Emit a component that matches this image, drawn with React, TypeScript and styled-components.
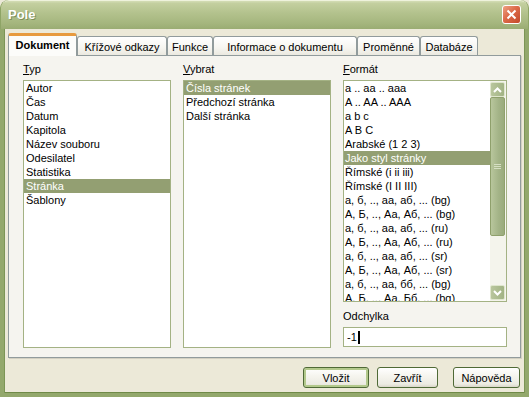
import React from 'react'
import styled, { createGlobalStyle } from 'styled-components'

const GlobalStyle = createGlobalStyle`
  html, body {
    margin: 0;
    padding: 0;
    background: #ece9d8;
  }
  body {
    font-family: "Liberation Sans", Arial, sans-serif;
    font-size: 11px;
    color: #000;
  }
`

const Window = styled.div`
  width: 529px;
  height: 397px;
  display: flex;
  flex-direction: column;
  background: #ece9d8;
  border-radius: 8px 8px 0 0;
  overflow: hidden;
`

const TitleBar = styled.div`
  height: 29px;
  flex: none;
  display: flex;
  align-items: center;
  justify-content: space-between;
  padding: 0 8px 0 8px;
  box-sizing: border-box;
  background: linear-gradient(to bottom, #dbe3bf 0%, #c3cf9f 12%, #b3c28d 45%, #a5b67e 80%, #9aac73 100%);
  border-radius: 8px 8px 0 0;
  box-shadow: inset 1px 0 0 #8ea466, inset -1px 0 0 #8ea466, inset 0 1px 0 #eef2dc;
`

const Title = styled.div`
  font-family: "Liberation Sans", Arial, sans-serif;
  font-weight: bold;
  font-size: 13px;
  color: #fff;
  text-shadow: 1px 1px 0 #7d8f58;
`

const CloseButton = styled.div`
  width: 19px;
  height: 19px;
  box-sizing: border-box;
  border: 1px solid #fff;
  border-radius: 3px;
  background: linear-gradient(135deg, #eea183 0%, #dc6b49 45%, #c4482a 100%);
  display: flex;
  align-items: center;
  justify-content: center;
`

const Body = styled.div`
  flex: 1;
  display: flex;
  flex-direction: column;
  padding: 4px 4px 0 4px;
  border: 4px solid #93a86c;
  border-top: none;
  box-shadow: inset 1px 0 0 #7c9556, inset -1px 0 0 #7c9556, inset 0 -1px 0 #6f8a48;
  box-sizing: border-box;
  min-height: 0;
`

const TabStrip = styled.div`
  height: 22px;
  display: flex;
  align-items: flex-end;
  flex: none;
`

const Tab = styled.div<{ $w: number; $active?: boolean }>`
  width: ${p => p.$w}px;
  box-sizing: border-box;
  display: flex;
  align-items: center;
  justify-content: center;
  white-space: nowrap;
  border: 1px solid #919b9c;
  border-bottom: none;
  border-radius: 3px 3px 0 0;
  position: relative;
  ${p =>
    p.$active
      ? `
    height: 23px;
    margin-bottom: -1px;
    z-index: 1;
    font-weight: bold;
    background: #fcfcfa;
    border-top: 3px solid #e79a3e;
    padding-bottom: 2px;
  `
      : `
    height: 19px;
    background: linear-gradient(to bottom, #ffffff 0%, #f6f5f0 60%, #ebe9e0 100%);
    padding-top: 1px;
  `}
`

const Panel = styled.div`
  height: 303px;
  flex: none;
  box-sizing: border-box;
  border: 1px solid #919b9c;
  background: #f5f4ef;
  box-shadow: 1px 1px 0 #d3d0c2;
  display: grid;
  grid-template-columns: 148px 148px 1fr;
  column-gap: 12px;
  padding: 6px 13px 0 14px;
`

const Column = styled.div`
  display: flex;
  flex-direction: column;
  min-width: 0;
`

const Label = styled.div<{ $top?: number }>`
  height: 14px;
  line-height: 14px;
  margin-top: ${p => p.$top ?? 0}px;
  margin-bottom: 4px;
  white-space: nowrap;
`

const ListBox = styled.div<{ $h: number }>`
  height: ${p => p.$h}px;
  box-sizing: border-box;
  border: 1px solid #a4b284;
  background: #fff;
  display: flex;
  overflow: hidden;
`

const Items = styled.div`
  flex: 1;
  min-width: 0;
  display: flex;
  flex-direction: column;
  overflow: hidden;
`

const Item = styled.div<{ $selected?: boolean; $pad?: number }>`
  height: 14px;
  line-height: 14px;
  flex: none;
  padding-left: ${p => p.$pad ?? 2}px;
  white-space: nowrap;
  background: ${p => (p.$selected ? '#939f72' : 'transparent')};
  color: ${p => (p.$selected ? '#fff' : '#000')};
`

const ScrollBar = styled.div`
  width: 16px;
  flex: none;
  display: flex;
  flex-direction: column;
  padding: 1px 1px 1px 0;
  box-sizing: border-box;
  background: #f4f4ec;
`

const ArrowButton = styled.div`
  height: 15px;
  flex: none;
  box-sizing: border-box;
  border: 1px solid #dfe6cd;
  border-radius: 2px;
  background: linear-gradient(to right, #b9c69d, #a2b384);
  display: flex;
  align-items: center;
  justify-content: center;
`

const Thumb = styled.div`
  height: 139px;
  flex: none;
  box-sizing: border-box;
  border: 1px solid #8fa06c;
  border-radius: 2px;
  background: linear-gradient(to right, #b8c69c, #a3b387 60%, #9aab7c);
  display: flex;
  align-items: center;
  justify-content: center;
`

const Track = styled.div`
  flex: 1;
`

const Input = styled.div`
  height: 20px;
  box-sizing: border-box;
  border: 1px solid #a4b284;
  background: #fff;
  display: flex;
  align-items: center;
  padding-left: 3px;
`

const Caret = styled.span`
  display: inline-block;
  width: 2px;
  height: 13px;
  margin-left: 1px;
  background: #000;
`

const ButtonRow = styled.div`
  display: flex;
  justify-content: flex-end;
  margin-top: 9px;
  padding-right: 1px;
`

const Button = styled.div<{ $w: number; $default?: boolean; $gap?: number }>`
  width: ${p => p.$w}px;
  height: 21px;
  margin-left: ${p => p.$gap ?? 0}px;
  box-sizing: border-box;
  border: 1px solid #4f6a36;
  border-radius: 3px;
  display: flex;
  align-items: center;
  justify-content: center;
  background: linear-gradient(to bottom, #ffffff 0%, #f6f5ef 40%, #ecebe2 85%, #d9d6c8 100%);
  box-shadow: ${p => (p.$default ? 'inset 0 0 0 2px #b3c98c' : 'none')};
`

const Grip = () => (
  <svg width="7" height="5" viewBox="0 0 7 5">
    <path d="M0 0.5h7M0 2.5h7M0 4.5h7" stroke="#d6dfc3" strokeWidth="1" />
  </svg>
)

const Chevron = ({ up }: { up?: boolean }) => (
  <svg width="9" height="6" viewBox="0 0 9 6">
    <path
      d={up ? 'M1 5 L4.5 1.5 L8 5' : 'M1 1 L4.5 4.5 L8 1'}
      fill="none"
      stroke="#fff"
      strokeWidth="2"
    />
  </svg>
)

const typ = ['Autor', 'Čas', 'Datum', 'Kapitola', 'Název souboru', 'Odesilatel', 'Statistika', 'Stránka', 'Šablony']
const vybrat = ['Čísla stránek', 'Předchozí stránka', 'Další stránka']
const format = [
  'a .. aa .. aaa',
  'A .. AA .. AAA',
  'a b c',
  'A B C',
  'Arabské (1 2 3)',
  'Jako styl stránky',
  'Římské (i ii iii)',
  'Římské (I II III)',
  'а, б, .., аа, аб, ... (bg)',
  'А, Б, .., Аа, Аб, ... (bg)',
  'а, б, .., аа, аб, ... (ru)',
  'А, Б, .., Аа, Аб, ... (ru)',
  'а, б, .., аа, аб, ... (sr)',
  'А, Б, .., Аа, Аб, ... (sr)',
  'а, б, .., аа, бб, ... (bg)',
  'А, Б, .., Аа, Бб, ... (bg)',
]

const tabs: [string, number][] = [
  ['Dokument', 69],
  ['Křížové odkazy', 90],
  ['Funkce', 46],
  ['Informace o dokumentu', 144],
  ['Proměnné', 63],
  ['Databáze', 58],
]

export default function App() {
  return (
    <>
      <GlobalStyle />
      <Window>
        <TitleBar>
          <Title>Pole</Title>
          <CloseButton>
            <svg width="11" height="11" viewBox="0 0 11 11">
              <path d="M1.5 1.5 L9.5 9.5 M9.5 1.5 L1.5 9.5" stroke="#fff" strokeWidth="2" />
            </svg>
          </CloseButton>
        </TitleBar>
        <Body>
          <TabStrip>
            {tabs.map(([name, w], i) => (
              <Tab key={name} $w={w} $active={i === 0}>
                {name}
              </Tab>
            ))}
          </TabStrip>
          <Panel>
            <Column>
              <Label>
                <u>T</u>yp
              </Label>
              <ListBox $h={268}>
                <Items>
                  {typ.map(t => (
                    <Item key={t} $selected={t === 'Stránka'}>
                      {t}
                    </Item>
                  ))}
                </Items>
              </ListBox>
            </Column>
            <Column>
              <Label>
                <u>V</u>ybrat
              </Label>
              <ListBox $h={268}>
                <Items>
                  {vybrat.map(t => (
                    <Item key={t} $selected={t === 'Čísla stránek'}>
                      {t}
                    </Item>
                  ))}
                </Items>
              </ListBox>
            </Column>
            <Column>
              <Label>
                <u>F</u>ormát
              </Label>
              <ListBox $h={222}>
                <Items>
                  {format.map(t => (
                    <Item key={t} $pad={1} $selected={t === 'Jako styl stránky'}>
                      {t}
                    </Item>
                  ))}
                </Items>
                <ScrollBar>
                  <ArrowButton>
                    <Chevron up />
                  </ArrowButton>
                  <Thumb>
                    <Grip />
                  </Thumb>
                  <Track />
                  <ArrowButton>
                    <Chevron />
                  </ArrowButton>
                </ScrollBar>
              </ListBox>
              <Label $top={7}>Odchylka</Label>
              <Input>
                -1
                <Caret />
              </Input>
            </Column>
          </Panel>
          <ButtonRow>
            <Button $w={66} $default>
              Vložit
            </Button>
            <Button $w={61} $gap={8}>
              Zavřít
            </Button>
            <Button $w={67} $gap={15}>
              Nápověda
            </Button>
          </ButtonRow>
        </Body>
      </Window>
    </>
  )
}
